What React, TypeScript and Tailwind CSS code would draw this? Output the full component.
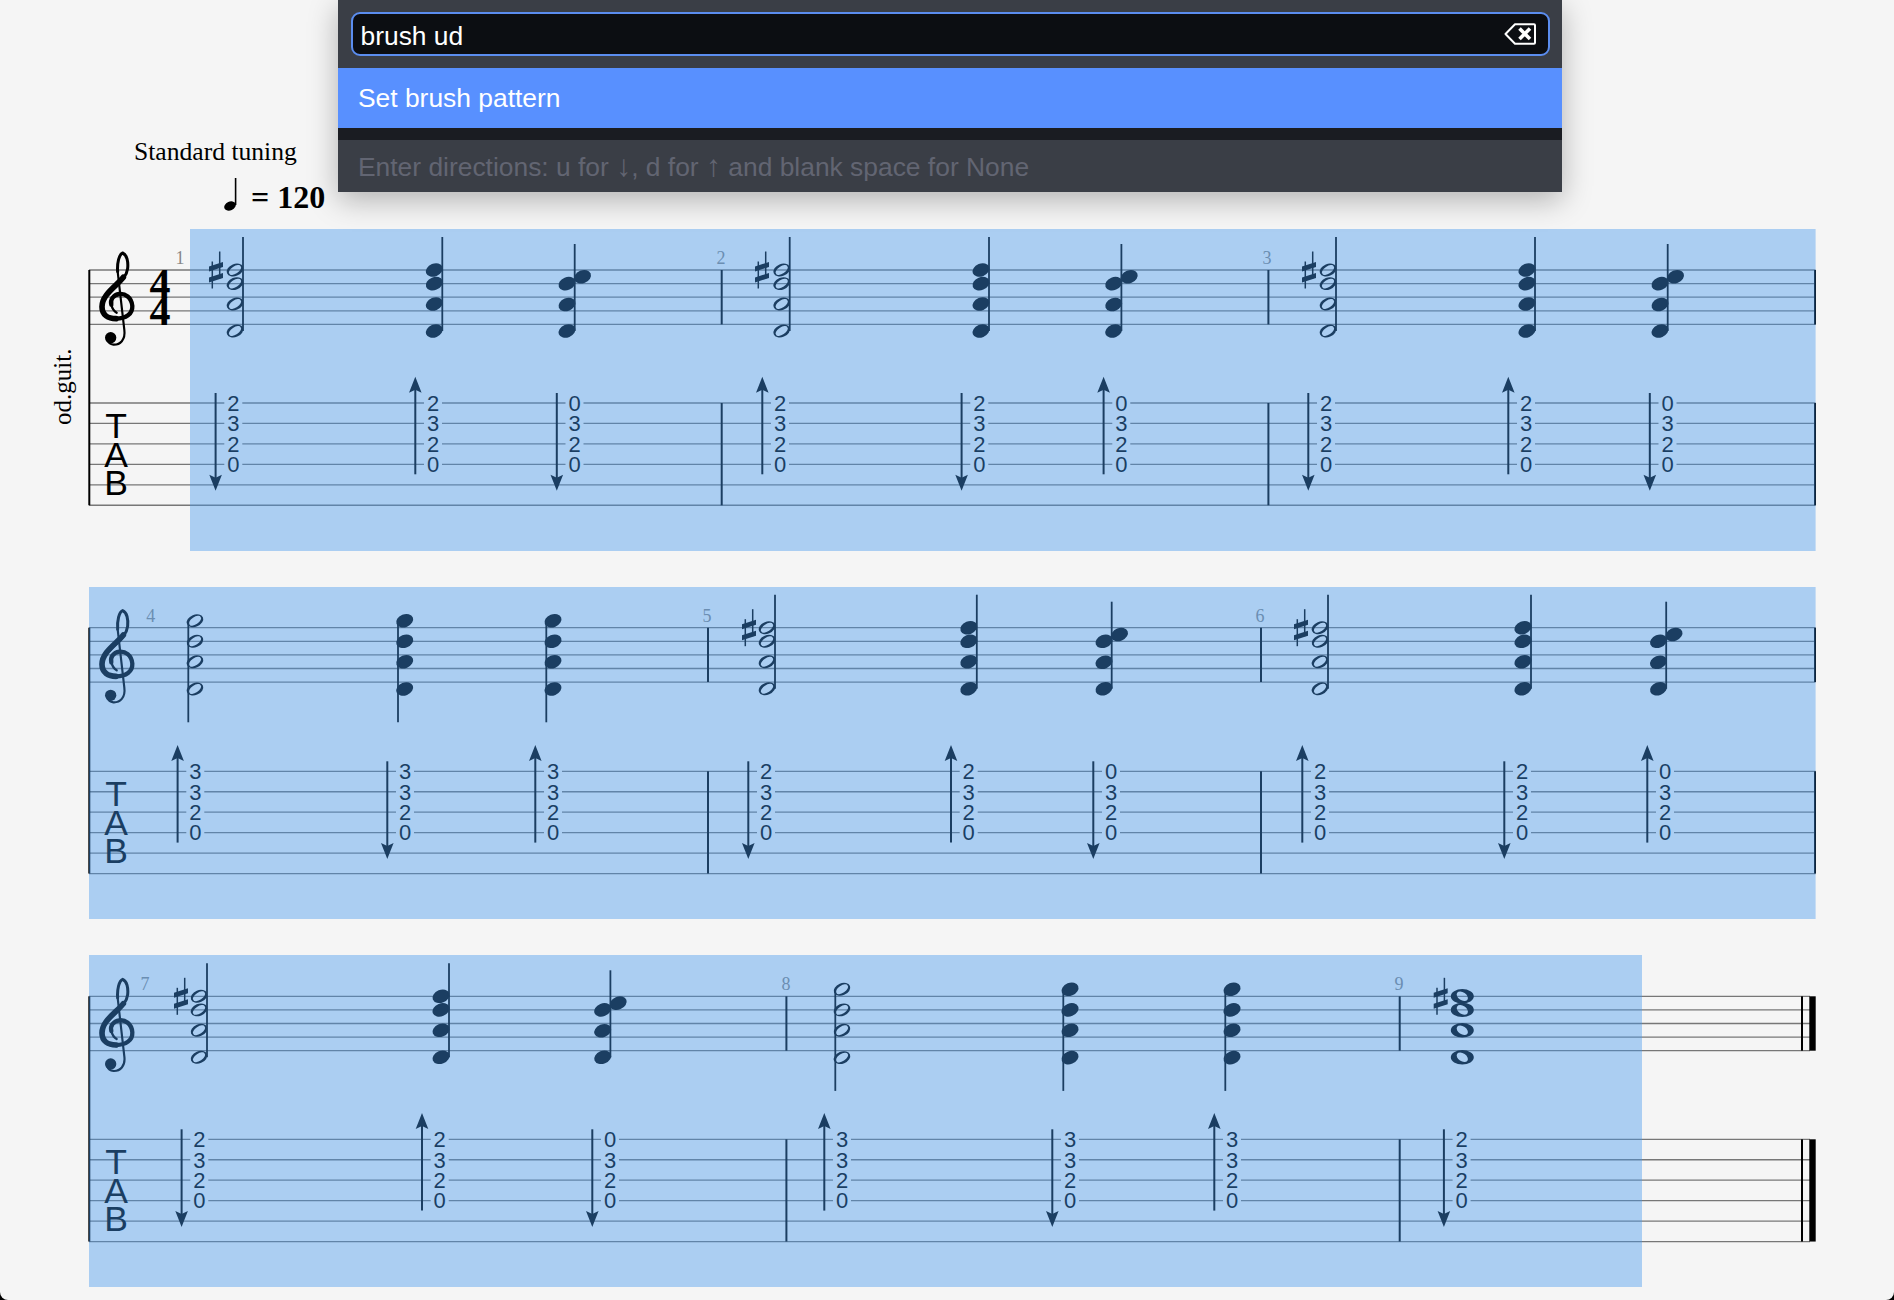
const SERIF = "font-['Liberation_Serif',serif]"
const SANS = "font-['Liberation_Sans',Arial,sans-serif]"

type ChordKind = 'open' | 'filled' | 'split' | 'openDown' | 'filledDown' | 'whole'
type Chord = { x: number; kind: ChordKind; sharp?: number }
type Strum = { x: number; dir: 'up' | 'down'; digits: string }

type System = {
  height: number
  staff: number
  tab: number
  blueX: number
  blueW: number
  bars: number[]
  nums: { n: number; x: number }[]
  chords: Chord[]
  strums: Strum[]
  first?: boolean
  last?: boolean
}

const systems: System[] = [
  {
    height: 322,
    staff: 41,
    tab: 174,
    blueX: 190,
    blueW: 1625.6,
    bars: [721.7, 1268.4],
    nums: [{ n: 1, x: 180 }, { n: 2, x: 721 }, { n: 3, x: 1267 }],
    first: true,
    chords: [
      { x: 235, kind: 'open', sharp: 216 },
      { x: 434.3, kind: 'filled' },
      { x: 567, kind: 'split' },
      { x: 781.7, kind: 'open', sharp: 762 },
      { x: 981, kind: 'filled' },
      { x: 1113.7, kind: 'split' },
      { x: 1328, kind: 'open', sharp: 1309 },
      { x: 1527, kind: 'filled' },
      { x: 1660, kind: 'split' },
    ],
    strums: [
      { x: 233.3, dir: 'down', digits: '2320' },
      { x: 433, dir: 'up', digits: '2320' },
      { x: 574.5, dir: 'down', digits: '0320' },
      { x: 780, dir: 'up', digits: '2320' },
      { x: 979.3, dir: 'down', digits: '2320' },
      { x: 1121.3, dir: 'up', digits: '0320' },
      { x: 1326, dir: 'down', digits: '2320' },
      { x: 1526, dir: 'up', digits: '2320' },
      { x: 1667.5, dir: 'down', digits: '0320' },
    ],
  },
  {
    height: 332,
    staff: 40.7,
    tab: 184.3,
    blueX: 89,
    blueW: 1726.6,
    bars: [708, 1261],
    nums: [{ n: 4, x: 150.7 }, { n: 5, x: 707 }, { n: 6, x: 1260 }],
    chords: [
      { x: 195, kind: 'openDown' },
      { x: 404.7, kind: 'filledDown' },
      { x: 553, kind: 'filledDown' },
      { x: 767, kind: 'open', sharp: 749 },
      { x: 968.8, kind: 'filled' },
      { x: 1104, kind: 'split' },
      { x: 1320, kind: 'open', sharp: 1301 },
      { x: 1523, kind: 'filled' },
      { x: 1658.5, kind: 'split' },
    ],
    strums: [
      { x: 195.3, dir: 'up', digits: '3320' },
      { x: 405, dir: 'down', digits: '3320' },
      { x: 553, dir: 'up', digits: '3320' },
      { x: 766, dir: 'down', digits: '2320' },
      { x: 968.7, dir: 'up', digits: '2320' },
      { x: 1111, dir: 'down', digits: '0320' },
      { x: 1320, dir: 'up', digits: '2320' },
      { x: 1522, dir: 'down', digits: '2320' },
      { x: 1665, dir: 'up', digits: '0320' },
    ],
  },
  {
    height: 332,
    staff: 41.3,
    tab: 184.3,
    blueX: 89,
    blueW: 1553,
    bars: [786.4, 1399.7],
    nums: [{ n: 7, x: 145 }, { n: 8, x: 786 }, { n: 9, x: 1399 }],
    last: true,
    chords: [
      { x: 199, kind: 'open', sharp: 181 },
      { x: 441, kind: 'filled' },
      { x: 602.7, kind: 'split' },
      { x: 842, kind: 'openDown' },
      { x: 1070, kind: 'filledDown' },
      { x: 1232, kind: 'filledDown' },
      { x: 1462.3, kind: 'whole', sharp: 1440.7 },
    ],
    strums: [
      { x: 199.3, dir: 'down', digits: '2320' },
      { x: 439.7, dir: 'up', digits: '2320' },
      { x: 610, dir: 'down', digits: '0320' },
      { x: 842, dir: 'up', digits: '3320' },
      { x: 1070, dir: 'down', digits: '3320' },
      { x: 1232, dir: 'up', digits: '3320' },
      { x: 1461.6, dir: 'down', digits: '2320' },
    ],
  },
]

function Clef({ y }: { y: number }) {
  // drawn in 3x coordinates, x origin 80, y origin is 30 above the top line
  return (
    <g transform={`translate(80 ${y - 30}) scale(0.3333)`} fill="none" stroke="#000" strokeLinecap="round">
      <path strokeWidth="9" d="M113 95 C111 70 117 43 128 39 C141 44 145 65 143 85 C140 115 110 135 88 158" />
      <path strokeWidth="17" d="M130 112 C110 138 66 163 66 200 C66 225 85 236 108 236" />
      <path strokeWidth="13" d="M108 236 C138 236 158 222 157 198 C155 172 135 160 118 162 C100 165 90 178 94 194" />
      <path strokeWidth="7" d="M94 194 C97 207 103 214 110 218" />
      <path strokeWidth="6.5" d="M113 95 L133 270 C137 300 120 315 100 314 C90 313 84 306 82 300" />
      <circle cx="92" cy="293" r="17" fill="#000" stroke="none" />
    </g>
  )
}

function Sharp({ x, y }: { x: number; y: number }) {
  return (
    <g>
      <line x1={x - 3.7} y1={y - 8.5} x2={x - 3.7} y2={y + 18.5} stroke="#000" strokeWidth="1.5" />
      <line x1={x + 3.7} y1={y - 18.5} x2={x + 3.7} y2={y + 8.5} stroke="#000" strokeWidth="1.5" />
      <polygon points={`${x - 7},${y - 3.5} ${x + 7},${y - 8} ${x + 7},${y - 3} ${x - 7},${y + 1.5}`} fill="#000" />
      <polygon points={`${x - 7},${y + 7.5} ${x + 7},${y + 3} ${x + 7},${y + 8} ${x - 7},${y + 12.5}`} fill="#000" />
    </g>
  )
}

function Head({ x, y, open }: { x: number; y: number; open?: boolean }) {
  if (open) {
    return (
      <g transform={`translate(${x} ${y}) rotate(-22)`}>
        <path
          d="M-8.6 0 a8.6 6 0 1 0 17.2 0 a8.6 6 0 1 0 -17.2 0 Z M-6.6 1.4 a6.8 3.2 -12 1 0 13.2 -2.8 a6.8 3.2 -12 1 0 -13.2 2.8 Z"
          fill="#000"
          fillRule="evenodd"
        />
      </g>
    )
  }
  return <ellipse cx={x} cy={y} rx="8.8" ry="6.4" fill="#000" transform={`rotate(-22 ${x} ${y})`} />
}

function WholeNote({ x, y }: { x: number; y: number }) {
  const hx = 6.2 * Math.cos(0.6)
  const hy = 6.2 * Math.sin(0.6)
  const d =
    `M${x - 11.5} ${y} a11.5 7.2 0 1 0 23 0 a11.5 7.2 0 1 0 -23 0 Z ` +
    `M${x - hx} ${y - hy} a6.2 4 34 1 0 ${2 * hx} ${2 * hy} a6.2 4 34 1 0 ${-2 * hx} ${-2 * hy} Z`
  return <path d={d} fill="#000" fillRule="evenodd" />
}

function ChordMark({ chord, staff }: { chord: Chord; staff: number }) {
  const { x, kind, sharp } = chord
  const ys = [0, 13.6, 34, 61].map((o) => staff + o)
  const downYs = [-7, 13.6, 34, 61.3].map((o) => staff + o)
  return (
    <g>
      {sharp !== undefined && <Sharp x={sharp} y={staff} />}
      {kind === 'whole' && ys.map((y) => <WholeNote key={y} x={x} y={y} />)}
      {(kind === 'open' || kind === 'filled') && (
        <>
          {ys.map((y) => (
            <Head key={y} x={x} y={y} open={kind === 'open'} />
          ))}
          <line x1={x + 8} y1={staff - 33} x2={x + 8} y2={staff + 61} stroke="#000" strokeWidth="1.8" />
        </>
      )}
      {kind === 'split' && (
        <>
          <Head x={x} y={staff + 13.6} />
          <Head x={x} y={staff + 34.5} />
          <Head x={x} y={staff + 61} />
          <Head x={x + 15.5} y={staff + 6.8} />
          <line x1={x + 7.7} y1={staff - 26} x2={x + 7.7} y2={staff + 61} stroke="#000" strokeWidth="1.8" />
        </>
      )}
      {(kind === 'openDown' || kind === 'filledDown') && (
        <>
          {downYs.map((y) => (
            <Head key={y} x={x} y={y} open={kind === 'openDown'} />
          ))}
          <line x1={x - 6.7} y1={staff - 7} x2={x - 6.7} y2={staff + 94.6} stroke="#000" strokeWidth="1.8" />
        </>
      )}
    </g>
  )
}

function StrumMark({ strum, tab }: { strum: Strum; tab: number }) {
  const ax = strum.x - 17.7
  const up = strum.dir === 'up'
  const top = up ? tab - 26.3 : tab - 10
  const bottom = up ? tab + 71.3 : tab + 87.7
  const head = up
    ? `${ax},${top} ${ax + 6.3},${top + 16} ${ax},${top + 13} ${ax - 6.3},${top + 16}`
    : `${ax},${bottom} ${ax + 6.3},${bottom - 16} ${ax},${bottom - 13} ${ax - 6.3},${bottom - 16}`
  return (
    <g>
      <line x1={ax} y1={top + (up ? 8 : 0)} x2={ax} y2={bottom - (up ? 0 : 8)} stroke="#000" strokeWidth="2" />
      <polygon points={head} fill="#000" />
      {strum.digits.split('').map((d, i) => {
        const y = tab + i * 20.4
        return (
          <g key={i}>
            <rect x={strum.x - 9} y={y - 2} width="18" height="4" fill="#f5f5f5" />
            <text x={strum.x} y={y + 7.8} textAnchor="middle" fontSize="22" fill="#000" className={SANS}>
              {d}
            </text>
          </g>
        )
      })}
    </g>
  )
}

function SystemRow({ sys }: { sys: System }) {
  const staffLines = [0, 1, 2, 3, 4].map((i) => sys.staff + i * 13.6)
  const tabLines = [0, 1, 2, 3, 4, 5].map((i) => sys.tab + i * 20.45)
  const staffEnd = staffLines[4]
  const tabEnd = tabLines[5]
  const lineEnd = sys.last ? 1810 : 1815.5

  return (
    <svg width="1894" height={sys.height} viewBox={`0 0 1894 ${sys.height}`} className="block">
      {staffLines.map((y) => (
        <line key={y} x1="89" y1={y} x2={lineEnd} y2={y} stroke="#777" strokeWidth="1.3" />
      ))}
      {tabLines.map((y) => (
        <line key={y} x1="89" y1={y} x2={lineEnd} y2={y} stroke="#777" strokeWidth="1.3" />
      ))}

      <line x1="89.3" y1={sys.staff} x2="89.3" y2={tabEnd} stroke="#000" strokeWidth="2" />

      {sys.bars.map((x) => (
        <g key={x}>
          <line x1={x} y1={sys.staff} x2={x} y2={staffEnd} stroke="#000" strokeWidth="2" />
          <line x1={x} y1={sys.tab} x2={x} y2={tabEnd} stroke="#000" strokeWidth="2" />
        </g>
      ))}

      {sys.last ? (
        <>
          <rect x="1801" y={sys.staff} width="2" height={staffEnd - sys.staff} fill="#000" />
          <rect x="1809.3" y={sys.staff} width="6.4" height={staffEnd - sys.staff} fill="#000" />
          <rect x="1801" y={sys.tab} width="2" height={tabEnd - sys.tab} fill="#000" />
          <rect x="1809.3" y={sys.tab} width="6.4" height={tabEnd - sys.tab} fill="#000" />
        </>
      ) : (
        <>
          <line x1="1815" y1={sys.staff} x2="1815" y2={staffEnd} stroke="#000" strokeWidth="2" />
          <line x1="1815" y1={sys.tab} x2="1815" y2={tabEnd} stroke="#000" strokeWidth="2" />
        </>
      )}

      <Clef y={sys.staff} />
      {sys.first && (
        <g className={`${SERIF} font-bold`} fontSize="42" textAnchor="middle" fill="#000">
          <text x="160" y={sys.staff + 27.5}>4</text>
          <text x="160" y={sys.staff + 55}>4</text>
        </g>
      )}
      {sys.first && (
        <text
          transform={`translate(70.7 ${425 - 229}) rotate(-90)`}
          fontSize="25"
          fill="#000"
          className={SERIF}
        >
          od.guit.
        </text>
      )}

      {sys.nums.map((m) => (
        <text key={m.n} x={m.x} y={sys.staff - 6} textAnchor="middle" fontSize="18" fill="#888" className={SERIF}>
          {m.n}
        </text>
      ))}

      <g fontSize="35.5" textAnchor="middle" fill="#000" className={SANS}>
        <text x="116" y={sys.tab + 35}>T</text>
        <text x="116" y={sys.tab + 63.7}>A</text>
        <text x="116" y={sys.tab + 92}>B</text>
      </g>

      {sys.chords.map((c) => (
        <ChordMark key={c.x} chord={c} staff={sys.staff} />
      ))}
      {sys.strums.map((s) => (
        <StrumMark key={s.x} strum={s} tab={sys.tab} />
      ))}

      <rect x={sys.blueX} y="0" width={sys.blueW} height={sys.height} fill="rgb(65,150,238)" fillOpacity="0.41" />
    </svg>
  )
}

function QuarterNote() {
  return (
    <svg width="16" height="36" viewBox="0 0 16 36" className="block">
      <ellipse cx="7" cy="29" rx="6" ry="4.4" fill="#000" transform="rotate(-24 7 29)" />
      <line x1="12.6" y1="1" x2="12.6" y2="28" stroke="#000" strokeWidth="1.6" />
    </svg>
  )
}

function ClearIcon() {
  return (
    <svg width="32" height="22" viewBox="0 0 32 22" fill="none" className="block">
      <path d="M1.5 11 L11 1.2 H30 A1 1 0 0 1 31 2.2 V19.8 A1 1 0 0 1 30 20.8 H11 Z" stroke="#fff" strokeWidth="2" strokeLinejoin="round" />
      <path d="M15.5 5.5 L26 16 M26 5.5 L15.5 16" stroke="#fff" strokeWidth="3.6" />
    </svg>
  )
}

function CommandPalette() {
  return (
    <div className={`absolute left-[338px] top-0 w-[1224px] bg-[#3a3e46] shadow-[0_8px_28px_rgba(0,0,0,0.28)] ${SANS} text-[26.4px]`}>
      <div className="px-[12.5px] pt-[12px] pb-[12.5px]">
        <div className="h-[43.5px] flex items-center justify-between bg-[#0c0e12] border-2 border-[#5b8def] rounded-[9px] pl-[8px] pr-[12px] text-white">
          <span className="pt-[6px]">brush ud</span>
          <ClearIcon />
        </div>
      </div>
      <div className="h-[60px] flex items-center px-[20px] pt-[2px] bg-[#5890ff] text-white">Set brush pattern</div>
      <div className="h-[12px] bg-[#1a1c22]" />
      <div className="h-[52px] flex items-center px-[20px] pt-[3px] text-[#626572]">
        <span className="whitespace-pre">
          Enter directions: u for <span className="text-[30px] leading-none">↓</span>, d for{' '}
          <span className="text-[30px] leading-none">↑</span> and blank space for None
        </span>
      </div>
    </div>
  )
}

export default function App() {
  return (
    <div className="relative w-[1894px] h-[1300px] overflow-hidden bg-black">
      <div className="h-full bg-[#f5f5f5] rounded-b-[8px] text-black">
        <div className={`h-[229px] flex flex-col pt-[136px] ${SERIF}`}>
          <div className="pl-[134px] text-[25.6px] leading-[32px]">Standard tuning</div>
          <div className="pl-[223px] mt-[9px] flex items-end gap-[12px]">
            <QuarterNote />
            <span className="text-[32px] leading-[36px] font-bold mb-[-2px]">= 120</span>
          </div>
        </div>
        <div className="flex flex-col gap-[36px]">
          {systems.map((s) => (
            <SystemRow key={s.staff} sys={s} />
          ))}
        </div>
      </div>
      <CommandPalette />
    </div>
  )
}
